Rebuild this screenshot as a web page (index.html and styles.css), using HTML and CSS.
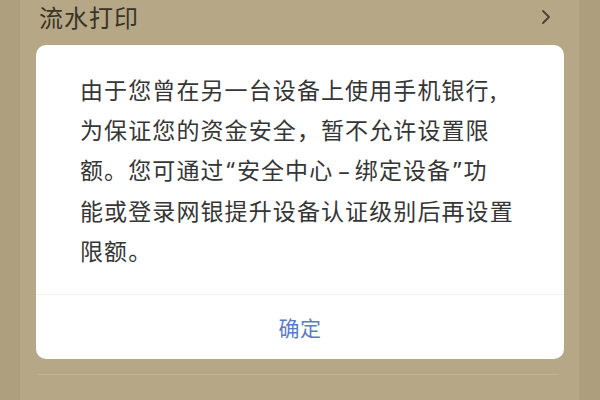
FILE: index.html
```html
<!DOCTYPE html>
<html lang="zh-CN">
<head>
<meta charset="utf-8">
<title>限额设置</title>
<link rel="stylesheet" href="styles.css">
</head>
<body>
<div class="screen">
  <div class="edge edge-left"></div>
  <div class="page">
    <div class="row row-top">
      <span class="row-label">流水打印</span>
      <svg class="chevron" width="10" height="16" viewBox="0 0 10 16"><path d="M2 2 L8 8 L2 14" fill="none" stroke="#4a4232" stroke-width="1.8" stroke-linecap="round" stroke-linejoin="round"/></svg>
    </div>
    <div class="spacer"></div>
    <div class="divider"></div>
  </div>
  <div class="edge edge-right"></div>

  <div class="dialog">
    <p class="dialog-msg">由于您曾在另一台设备上使用手机银行,<br>为保证您的资金安全，暂不允许设置限<br>额。您可通过<span class="latin">“</span>安全中心<span class="latin dash">–</span>绑定设备<span class="latin">”</span>功<br>能或登录网银提升设备认证级别后再设置<br>限额。</p>
    <div class="dialog-btn">确定</div>
  </div>
</div>
</body>
</html>
```

FILE: styles.css
```css
html, body {
  margin: 0;
  padding: 0;
}
body {
  width: 600px;
  height: 400px;
  overflow: hidden;
  background: #b6a886;
  font-family: "Noto Sans CJK SC", "Noto Sans", sans-serif;
}
.screen {
  position: relative;
  display: flex;
  width: 600px;
  height: 400px;
}
.edge {
  flex: 0 0 auto;
  height: 100%;
}
.edge-left {
  width: 20px;
  background: #ae9f7e;
}
.edge-right {
  width: 21px;
  background: #ad9f7d;
}
.page {
  flex: 1 1 auto;
  display: flex;
  flex-direction: column;
  padding: 0 18px;
}
.row-top {
  display: flex;
  align-items: center;
  justify-content: space-between;
  height: 34px;
  padding-right: 10px;
}
.row-label {
  font-size: 24px;
  line-height: 34px;
  color: #3a3426;
  letter-spacing: 1px;
  padding-left: 1px;
}
.chevron {
  display: block;
}
.spacer {
  height: 340px;
}
.divider {
  height: 1px;
  background: #c1b493;
  margin-right: 2px;
}
.dialog {
  position: absolute;
  left: 36px;
  top: 45px;
  width: 528px;
  background: #ffffff;
  border-radius: 10px;
  overflow: hidden;
}
.dialog-msg {
  margin: 0;
  padding: 24px 40px 24px 44px;
  font-size: 23px;
  line-height: 40px;
  letter-spacing: 1.1px;
  color: #363636;
  white-space: nowrap;
}
.latin {
  font-family: "Noto Sans", "DejaVu Sans", sans-serif;
  letter-spacing: 0;
  margin: 0 2px;
}
.dash {
  margin: 0 5px;
}
.dialog-btn {
  border-top: 1px solid #f3f1e8;
  height: 64px;
  display: flex;
  align-items: center;
  justify-content: center;
  font-size: 21px;
  color: #5a7cc6;
  letter-spacing: 0.5px;
}
```
